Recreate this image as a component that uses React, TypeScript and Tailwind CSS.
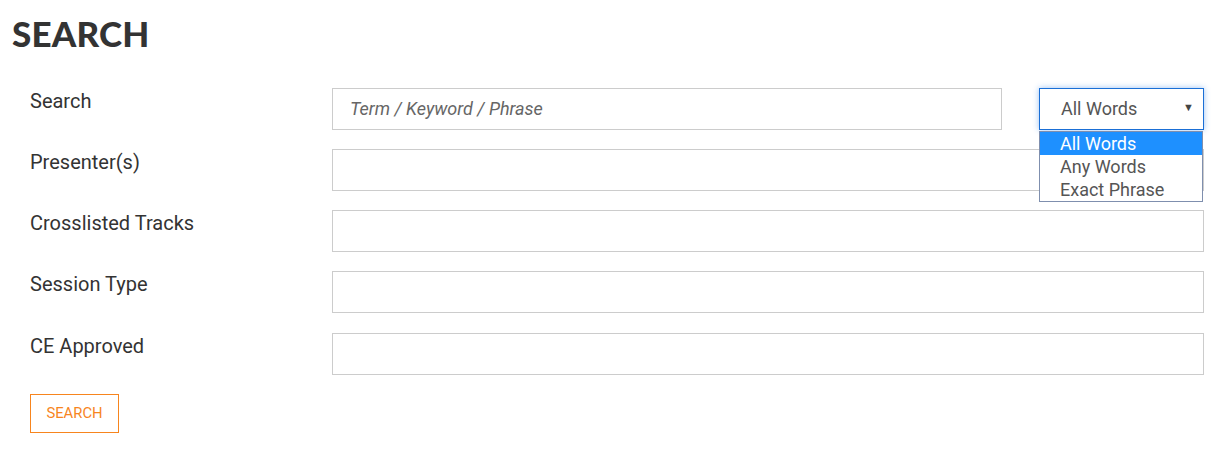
import React from "react";

const fields = ["Presenter(s)", "Crosslisted Tracks", "Session Type", "CE Approved"];
const options = ["All Words", "Any Words", "Exact Phrase"];

export default function App() {
  return (
    <div className="min-h-screen bg-white text-[#333] font-['Roboto',sans-serif]">
      <h1 className="pl-[12px] pt-[14px] font-['Lato',sans-serif] text-[35px] leading-[1.1] font-black tracking-[0.2px] text-[#333]">
        SEARCH
      </h1>

      <div className="pl-[30px] pr-[18px] pt-[35px] flex flex-col gap-[19.25px]">
        <div className="flex items-start">
          <label className="w-[302px] text-[20px] leading-[27px]">Search</label>
          <div className="flex-1 flex gap-[37px]">
            <input
              className="h-[42px] flex-1 border border-[#ccc] px-[17px] text-[18px] italic outline-none placeholder:text-[#666]"
              placeholder="Term / Keyword / Phrase"
            />
            <div className="relative w-[165px]">
              <div className="h-[42px] border border-[#1a6fd6] shadow-[0_0_6px_rgba(30,120,230,0.45)] flex items-center justify-between pl-[21px] pr-[9px] text-[18px] text-[#555] bg-white">
                <span>All Words</span>
                <span className="text-[11px] text-[#444]">▼</span>
              </div>
              <ul className="absolute left-0 top-full mt-px w-[164px] border border-[#7f8fae] bg-white z-10 text-[18px] leading-[23px]">
                {options.map((o, i) => (
                  <li
                    key={o}
                    className={
                      i === 0 ? "bg-[#1e90ff] text-white pl-[20px]" : "text-[#555] pl-[20px]"
                    }
                  >
                    {o}
                  </li>
                ))}
              </ul>
            </div>
          </div>
        </div>

        {fields.map((f) => (
          <div key={f} className="flex items-start">
            <label className="w-[302px] text-[20px] leading-[27px]">{f}</label>
            <input className="h-[42px] flex-1 border border-[#ccc] px-[17px] text-[18px] outline-none" />
          </div>
        ))}

        <div>
          <button className="h-[39px] w-[89px] border border-[#f7851e] text-[14.8px] text-[#f7851e] uppercase">
            Search
          </button>
        </div>
      </div>
    </div>
  );
}
